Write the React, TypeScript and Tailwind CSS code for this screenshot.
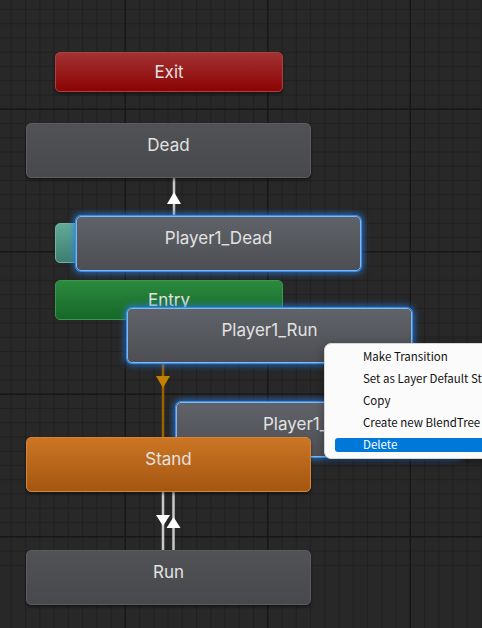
import type { ReactNode } from "react";

const GRID_W = 482;
const GRID_H = 628;

function GridBackdrop() {
  const minor: ReactNode[] = [];
  const major: ReactNode[] = [];
  for (let k = 0; k < 40; k++) {
    const x = 11.3 + k * 14.25;
    const y = 9.5 + k * 14.25;
    const isMajor = k % 10 === 8;
    const isMajorY = k % 10 === 7;
    if (x < GRID_W) {
      (isMajor ? major : minor).push(
        <line key={`x${k}`} x1={x} y1={0} x2={x} y2={GRID_H} />
      );
    }
    if (y < GRID_H) {
      (isMajorY ? major : minor).push(
        <line key={`y${k}`} x1={0} y1={y} x2={GRID_W} y2={y} />
      );
    }
  }
  return (
    <svg className="absolute inset-0" width={GRID_W} height={GRID_H}>
      <g stroke="#212121" strokeWidth={1}>{minor}</g>
      <g stroke="#171717" strokeWidth={1.4}>{major}</g>
    </svg>
  );
}

function Transitions() {
  return (
    <svg className="absolute inset-0" width={GRID_W} height={GRID_H}>
      {/* Player1_Dead -> Dead */}
      <line x1={174} y1={178} x2={174} y2={216} stroke="#c8c8c8" strokeWidth={2.5} />
      <polygon points="174,192 167,204 181,204" fill="#ffffff" />
      {/* Player1_Run -> Stand */}
      <line x1={163} y1={363} x2={163} y2={437} stroke="#9a6200" strokeWidth={2.5} />
      <polygon points="163,388 156,376 170,376" fill="#c27f00" />
      {/* Stand <-> Run */}
      <line x1={163} y1={492} x2={163} y2={551} stroke="#c8c8c8" strokeWidth={2.5} />
      <line x1={173.5} y1={492} x2={173.5} y2={551} stroke="#c8c8c8" strokeWidth={2.5} />
      <polygon points="163,526 156,515 170,515" fill="#ffffff" />
      <polygon points="173.5,517 166.5,528 180.5,528" fill="#ffffff" />
    </svg>
  );
}

const label = "font-['Inter','Noto_Sans',sans-serif] text-[17px] leading-[20px] text-[#e2e2e2]";

function StateNode({ className, children }: { className: string; children: ReactNode }) {
  return (
    <div className={`absolute h-[55px] w-[285px] rounded-[5px] pt-[11px] text-center ${label} ${className}`}>
      {children}
    </div>
  );
}

function SmallNode({ className, children }: { className: string; children?: ReactNode }) {
  return (
    <div className={`absolute flex h-[40px] w-[228px] items-center justify-center rounded-[5px] ${label} ${className}`}>
      {children}
    </div>
  );
}

const plain =
  "bg-[linear-gradient(to_bottom,#505256,#48494d)] shadow-[0_2px_3px_rgba(0,0,0,0.45)] border border-[#5a5c60]";
const selected =
  "bg-[linear-gradient(to_bottom,#5f6268,#4d4f54)] border border-[#7fb8f0] shadow-[0_0_0_1px_#3a8ee6,0_0_7px_2px_rgba(38,128,235,0.8)]";

function ContextMenu() {
  const items = ["Make Transition", "Set as Layer Default State", "Copy", "Create new BlendTree"];
  return (
    <div className="absolute left-[324px] top-[343px] w-[200px] rounded-[7px] border border-[#d6d6d6] bg-[#fbfbfb] py-[2px] font-['Noto_Sans_CJK_KR','Noto_Sans',sans-serif] text-[11.5px] text-[#111] shadow-[0_3px_10px_rgba(0,0,0,0.35)]">
      {items.map((item) => (
        <div key={item} className="flex h-[22px] items-center whitespace-nowrap pl-[38px]">
          {item}
        </div>
      ))}
      <div className="flex h-[22px] items-center py-[4px] pl-[10px]">
        <div className="flex h-[14px] w-full items-center rounded-[3px] bg-[#0078d7] pl-[28px] text-white">
          Delete
        </div>
      </div>
    </div>
  );
}

export default function App() {
  return (
    <div className="relative h-[628px] w-[482px] overflow-hidden bg-[#282828]">
      <GridBackdrop />
      <Transitions />

      <SmallNode className="left-[55px] top-[52px] bg-[linear-gradient(to_bottom,#a33232,#8c0404)] border border-[#b04040] shadow-[0_2px_3px_rgba(0,0,0,0.45)]">
        Exit
      </SmallNode>

      <StateNode className={`left-[26px] top-[123px] ${plain}`}>Dead</StateNode>

      {/* Any State, its label hidden under Player1_Dead */}
      <SmallNode className="left-[55px] top-[223px] bg-[linear-gradient(to_bottom,#62ab98,#3e7e6f)] border border-[#6fb5a2]" />
      <StateNode className={`left-[76px] top-[216px] ${selected}`}>Player1_Dead</StateNode>

      <SmallNode className="left-[55px] top-[280px] bg-[linear-gradient(to_bottom,#2b8a3e,#176728)] border border-[#3a9a4c]">
        Entry
      </SmallNode>
      <StateNode className={`left-[127px] top-[308px] ${selected}`}>Player1_Run</StateNode>

      <StateNode className={`left-[176px] top-[402px] ${selected}`}>Player1_Stand</StateNode>

      <StateNode className="left-[26px] top-[437px] bg-[linear-gradient(to_bottom,#cc7625,#a55610)] border border-[#d6853a] shadow-[0_2px_3px_rgba(0,0,0,0.45)]">
        Stand
      </StateNode>

      <StateNode className={`left-[26px] top-[550px] ${plain}`}>Run</StateNode>

      <ContextMenu />
    </div>
  );
}
